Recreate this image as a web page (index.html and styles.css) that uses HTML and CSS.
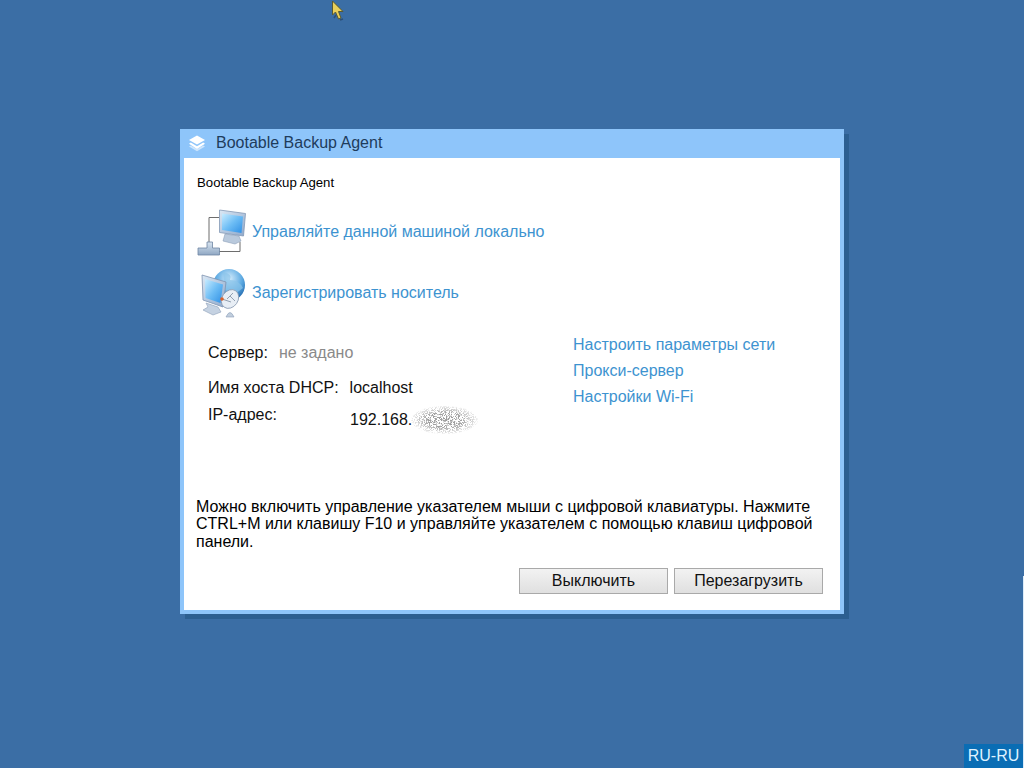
FILE: index.html
```html
<!DOCTYPE html>
<html lang="ru">
<head>
<meta charset="utf-8">
<title>Bootable Backup Agent</title>
<link rel="stylesheet" href="styles.css">
</head>
<body>
<svg class="cursor" width="14" height="22" viewBox="0 0 14 22"><path d="M1.500 1 L1.500 15 L4.500 12 L7.500 19 L10 18 L7.500 11.500 L12 11.500 Z" fill="#e8cf5a" stroke="#5a5a30" stroke-width="1"/><path d="M3 18 L5 15 M9 20 L12 19" stroke="#2b4f78" stroke-width="1.500"/></svg>

<main class="window">
  <header class="titlebar">
    <svg class="title-icon" width="18" height="17" viewBox="0 0 18 17"><path d="M9 .5 L17 5 L9 9.500 L1 5 Z" fill="#fff"/><path d="M2.800 7.500 L1 8.800 L9 14 L17 8.800 L15.200 7.500 L9 11.300 Z" fill="#fff"/><path d="M2.800 10.500 L1 11.500 L9 16.300 L17 11.500 L15.200 10.500 L9 14 Z" fill="#fff" opacity=".55"/></svg>
    <span class="title-text">Bootable Backup Agent</span>
  </header>
  <div class="content">
    <h1 class="heading">Bootable Backup Agent</h1>

    <div class="action action-first">
      <svg class="action-icon" width="50" height="50" viewBox="0 0 50 50">
        <defs>
          <linearGradient id="scr" x1="0" y1="0" x2="1" y2="1"><stop offset="0" stop-color="#c8ecff"/><stop offset=".5" stop-color="#6dbdf5"/><stop offset="1" stop-color="#2f8fe4"/></linearGradient>
          <linearGradient id="frm" x1="0" y1="0" x2="1" y2="1"><stop offset="0" stop-color="#dce8f4"/><stop offset="1" stop-color="#8ea8cb"/></linearGradient>
          <linearGradient id="hub" x1="0" y1="0" x2="0" y2="1"><stop offset="0" stop-color="#d9e5f1"/><stop offset="1" stop-color="#8fa7c3"/></linearGradient>
          <radialGradient id="globe" cx=".5" cy=".3" r=".75"><stop offset="0" stop-color="#d6edfc"/><stop offset=".55" stop-color="#5daae2"/><stop offset="1" stop-color="#12579f"/></radialGradient>
        </defs>
        <path d="M22 10.500 H12 V36 M22 44.500 H43 V35" fill="none" stroke="#6d6d6d" stroke-width="1"/>
        <path d="M28 27 L42 29 L44 34 L38 37 L26 34 Z" fill="#b9c9dc" stroke="#8da0b8" stroke-width=".6"/>
        <path d="M22.500 3 L48.500 6.500 L46.500 29 L22.500 25.500 Z" fill="url(#frm)" stroke="#8398b5" stroke-width=".8"/>
        <path d="M25 6.500 L46 9.500 L44.500 26 L25 23 Z" fill="url(#scr)"/>
        <path d="M10 35 H15.500 V41 H22.500 V48 H1 V41 H10 Z" fill="url(#hub)" stroke="#6f86a3" stroke-width=".8"/>
      </svg>
      <a class="link" href="#">Управляйте данной машиной локально</a>
    </div>

    <div class="action action-second">
      <svg class="action-icon" width="50" height="50" viewBox="0 0 50 50">
        <circle cx="32" cy="17" r="16" fill="url(#globe)"/>
        <path d="M26 4 Q36 6 33 12 Q42 12 46 20 L38 26 L28 22 Z" fill="#8cc4ea" opacity=".7"/>
        <path d="M5 7 L29 14 L26 39 L6 32 Z" fill="url(#frm)" stroke="#7f93b0" stroke-width=".8"/>
        <path d="M8 11 L26 16.500 L23.500 35 L8.500 30 Z" fill="url(#scr)"/>
        <path d="M9 35 L21 39 L24 44 L16 47 L6 42 L11 39 Z" fill="#c5d2e2" stroke="#8da0b8" stroke-width=".6"/>
        <ellipse cx="33" cy="31" rx="8" ry="10" transform="rotate(35 33 31)" fill="#e8eef5" stroke="#8a9bb3" stroke-width=".8"/>
        <path d="M25 31 L34 34 M36 25 L30 31 M33 28 L38 33" stroke="#7b8ba0" stroke-width=".8"/>
        <circle cx="25" cy="31" r="1.800" fill="#d9632f"/>
        <path d="M29 49 Q33 40 37 49 Z" fill="#c1cedd" stroke="#8da0b8" stroke-width=".6"/>
      </svg>
      <a class="link" href="#">Зарегистрировать носитель</a>
    </div>

    <div class="details">
      <dl class="info">
        <div class="info-row row-server"><dt class="label">Сервер:</dt><dd class="value muted">не задано</dd></div>
        <div class="info-row row-host"><dt class="label">Имя хоста DHCP:</dt><dd class="value">localhost</dd></div>
        <div class="info-row row-ip"><dt class="label label-ip">IP-адрес:</dt><dd class="value value-ip">192.168.<svg class="blur" width="67" height="28" viewBox="0 0 67 28"><defs><filter id="noise" x="0" y="0" width="100%" height="100%"><feTurbulence type="fractalNoise" baseFrequency="1.300" numOctaves="1" seed="11"/><feColorMatrix values="0 0 0 0 .35  0 0 0 0 .35  0 0 0 0 .35  9 0 0 0 -4.200"/><feComposite in2="SourceGraphic" operator="in"/></filter><radialGradient id="fade"><stop offset=".5" stop-color="#000"/><stop offset="1" stop-color="#000" stop-opacity=".15"/></radialGradient></defs><ellipse cx="33.500" cy="14" rx="33.500" ry="14" fill="url(#fade)" filter="url(#noise)"/></svg></dd></div>
      </dl>
      <nav class="net-links">
        <a class="link" href="#">Настроить параметры сети</a>
        <a class="link" href="#">Прокси-сервер</a>
        <a class="link" href="#">Настройки Wi-Fi</a>
      </nav>
    </div>

    <p class="hint">Можно включить управление указателем мыши с цифровой клавиатуры. Нажмите CTRL+M или клавишу F10 и управляйте указателем с помощью клавиш цифровой панели.</p>

    <div class="buttons">
      <button class="btn" type="button">Выключить</button>
      <button class="btn" type="button">Перезагрузить</button>
    </div>
  </div>
</main>

<div class="locale">RU-RU</div>
</body>
</html>
```

FILE: styles.css
```css
* { box-sizing: border-box; }
html, body { margin: 0; padding: 0; }
body {
  width: 1024px;
  height: 768px;
  overflow: hidden;
  position: relative;
  background: #3b6ea5;
  font-family: "Liberation Sans", Arial, sans-serif;
  font-size: 16px;
  line-height: 18px;
  color: #111;
}
body::after {
  content: "";
  position: absolute;
  right: 0;
  top: 576px;
  bottom: 0;
  width: 1px;
  background: #dcecfa;
}
.cursor { position: absolute; left: 331px; top: 0; }
.window {
  position: absolute;
  left: 180px;
  top: 129px;
  width: 664px;
  height: 485px;
  border: 4px solid #8ec5fa;
  border-top: 0;
  background: #fff;
  box-shadow: 5px 5px 0 #2c5f91;
  display: flex;
  flex-direction: column;
}
.titlebar {
  height: 29px;
  margin: 0 -4px;
  padding: 0 0 1px 8px;
  background: #8ec5fa;
  display: flex;
  align-items: center;
  gap: 10px;
}
.title-icon { flex: none; }
.title-text { color: #1e3c5c; }
.content { flex: 1; display: flex; flex-direction: column; padding: 0 17px 16px 13px; }
.heading { margin: 16px 0 0; font-size: 13.200px; font-weight: 400; line-height: 17px; color: #000; }
.action { display: flex; align-items: center; gap: 5px; }
.action-first { margin-top: 16px; }
.action-second { margin-top: 11px; }
.action-icon { flex: none; }
.link { color: #3d93d0; text-decoration: none; }
.details { display: flex; justify-content: space-between; margin-top: 10px; padding-left: 11px; }
.info { margin: 0; }
.info-row { display: flex; }
.label, .value { margin: 0; }
.row-server { margin-top: 16px; gap: 11px; }
.row-host { margin-top: 17px; gap: 11px; }
.row-ip { margin-top: 9px; }
.label-ip { width: 142px; }
.value-ip { display: flex; align-items: center; margin-top: 5px; height: 18px; }
.muted { color: #8a8a8a; }
.blur { flex: none; margin-left: -1px; }
.net-links { display: flex; flex-direction: column; gap: 8px; width: 250px; padding-top: 8px; }
.hint { margin: auto 0 0 -1px; font-size: 16px; line-height: 17.500px; color: #000; width: 625px; }
.buttons { display: flex; justify-content: flex-end; gap: 6px; margin-top: 18px; }
.btn {
  width: 149px;
  height: 26px;
  padding: 0;
  border: 1px solid #a9a9a9;
  background: linear-gradient(#f2f2f2, #e0e0e0);
  font: inherit;
  color: #111;
}
.locale {
  position: absolute;
  right: 1px;
  bottom: 0;
  width: 59px;
  height: 24px;
  background: #0a6db4;
  color: #dff2ff;
  line-height: 24px;
  text-align: center;
}
```
